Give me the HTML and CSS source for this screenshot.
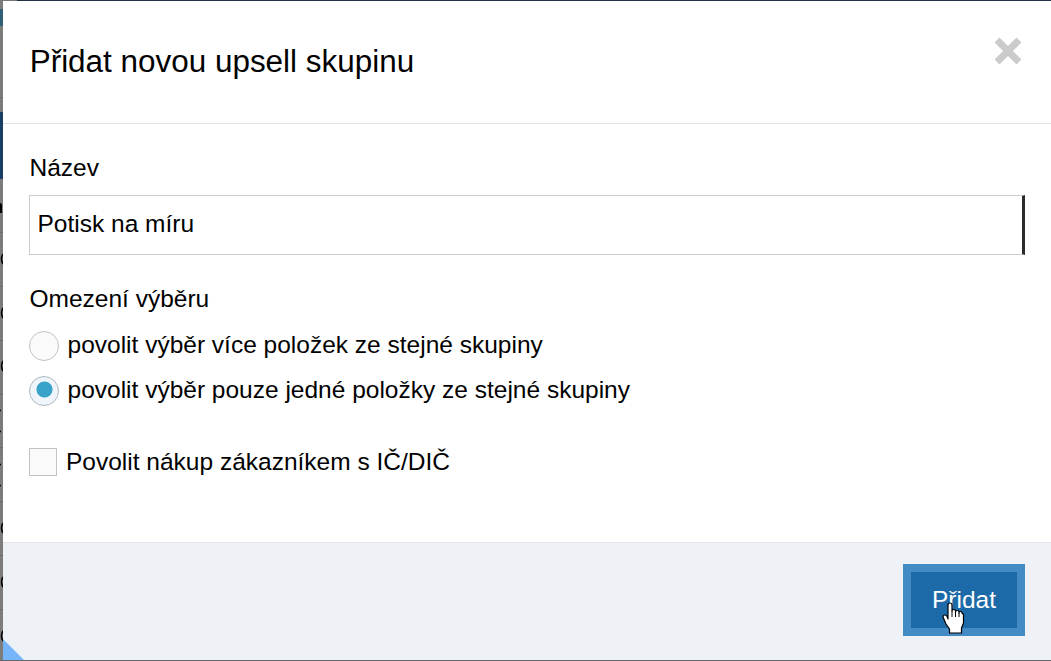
FILE: index.html
```html
<!DOCTYPE html>
<html lang="cs">
<head>
<meta charset="utf-8">
<title>Přidat novou upsell skupinu</title>
<link rel="stylesheet" href="styles.css">
</head>
<body>
<svg class="backdrop" width="1051" height="661" viewBox="0 0 1051 661" aria-hidden="true">
  <rect width="1051" height="661" fill="#7c7c7c"/>
  <rect width="1051" height="1" fill="#1d3045"/>
  <rect width="17" height="1" fill="#777"/>
  <rect y="9" width="3" height="17" fill="#315f75"/>
  <rect y="112" width="3" height="67" fill="#173f63"/>
  <path d="M0 97.500h3M0 232.500h3M0 286.500h3M0 340.500h3M0 394.500h3M0 447.500h3M0 501.500h3M0 555.500h3M0 609.500h3" stroke="#6b6b6b"/>
  <path d="M0 203q2 0 2 3v7H0z"/>
  <g fill="none" stroke="#000" stroke-width="1.500">
    <path d="M3 254q-3 5 0 10M3 308q-3 5 0 10M3 361q-3 5 0 10M3 523q-3 5 0 10M3 577q-3 5 0 10M3 631q-3 5 0 10"/>
    <path d="M0 410.500h1M0 431.500h1M0 464.500h1M0 485.500h1"/>
  </g>
  <rect y="660" width="1051" height="1" fill="#66666b"/>
</svg>
<form class="modal">
  <header class="modal-header">
    <h1 class="title">Přidat novou upsell skupinu</h1>
    <button class="close" type="button" aria-label="Zavřít">
      <svg width="28" height="28" viewBox="0 0 28 28"><path d="M3 3L25 25M25 3L3 25" stroke="#cbcbcb" stroke-width="7"/></svg>
    </button>
  </header>
  <main class="modal-body">
    <label class="label" for="name">Název</label>
    <input class="field" id="name" type="text" value="Potisk na míru">
    <div class="label limit-label">Omezení výběru</div>
    <label class="option"><input class="radio" type="radio" name="limit"><span>povolit výběr více položek ze stejné skupiny</span></label>
    <label class="option"><input class="radio" type="radio" name="limit" checked><span>povolit výběr pouze jedné položky ze stejné skupiny</span></label>
    <label class="option company"><input class="check" type="checkbox"><span>Povolit nákup zákazníkem s IČ/DIČ</span></label>
  </main>
  <footer class="modal-footer">
    <button class="submit" type="button">Přidat</button>
    <svg class="corner" width="21" height="21" viewBox="0 0 21 21"><path d="M0 0L21 21H0z" fill="#75b5fa"/></svg>
  </footer>
</form>
<svg class="cursor" width="23" height="32" viewBox="0 0 23 32" aria-hidden="true">
  <path d="M6 17V3q0-2 2-2t2 2v6q0-1.500 1.700-1.500T13.500 9v1q0-1.500 1.700-1.500T17 10v1q0-1.500 1.500-1.500T20 11l1.500 1.500V21l-2 5v5H7.500v-4L4 22l-3-7q0-2 2-2t3 4z" fill="#fff" stroke="#000" stroke-width="1.200" stroke-linejoin="round"/>
  <path d="M10 9v6M13.500 10v5M17 11v4" stroke="#000"/>
</svg>
</body>
</html>
```

FILE: styles.css
```css
* { box-sizing: border-box; }
body {
  margin: 0;
  width: 1051px;
  height: 661px;
  padding: 1px 0 1px 3px;
  overflow: hidden;
  font-family: "Liberation Sans", Arial, sans-serif;
  font-size: 24.5px;
  color: #000;
}
.backdrop { position: absolute; top: 0; left: 0; z-index: -1; }
.modal {
  display: flex;
  flex-direction: column;
  height: 659px;
  background: #fff;
}
.modal-header {
  display: flex;
  justify-content: space-between;
  align-items: flex-start;
  height: 123px;
  padding: 36px 29px 0 26px;
  border-bottom: 1px solid #e2e2e2;
}
.title { margin: 6px 0 0 0.7px; font-size: 31.45px; font-weight: 400; line-height: 38px; white-space: nowrap; }
.close { padding: 0; border: 0; background: none; line-height: 0; }
.modal-body {
  display: flex;
  flex-direction: column;
  flex: 1;
  padding: 29px 26px 0;
}
.label { padding-left: 0.5px; line-height: 30px; }
.field {
  height: 60px;
  margin-top: 12px;
  padding: 0 8px 3px 7.5px;
  border: 1px solid #ccc;
  border-right: 3px solid #2b2b2b;
  border-radius: 0;
  outline: 0;
  background: #fff;
  color: #000;
  font: inherit;
}
.limit-label { margin-top: 29px; }
.option {
  display: flex;
  align-items: center;
  gap: 8.5px;
  height: 30px;
  margin-top: 17px;
  white-space: nowrap;
}
.option + .option { margin-top: 15px; }
.option span { line-height: 30px; margin-top: -3px; }
.radio, .check {
  appearance: none;
  flex: none;
  margin: 0;
  border: 1px solid #c3c3c3;
  background: #fafafa;
}
.radio { width: 30px; height: 30px; border-radius: 50%; }
.radio:checked {
  border-color: #adb8c0;
  background: radial-gradient(circle at 14.5px 12.5px, #38a2c8 7.6px, #eff5fa 8.4px);
}
.check { width: 28px; height: 28px; }
.option.company { gap: 9px; margin-top: 41px; }
.option.company span { margin-top: -1px; }
.modal-footer {
  display: flex;
  position: relative;
  justify-content: flex-end;
  align-items: flex-start;
  height: 118px;
  padding: 21px 26px 0;
  border-top: 1px solid #e3e5e8;
  background: #eef2f7;
}
.submit {
  width: 122px;
  height: 72px;
  padding: 0 0 1px;
  border: 8px solid #428bc5;
  background: #1d6aa8;
  color: #fff;
  font: inherit;
}
.corner { position: absolute; left: 0; bottom: 0; }
.cursor { position: absolute; left: 942px; top: 602px; }
```
